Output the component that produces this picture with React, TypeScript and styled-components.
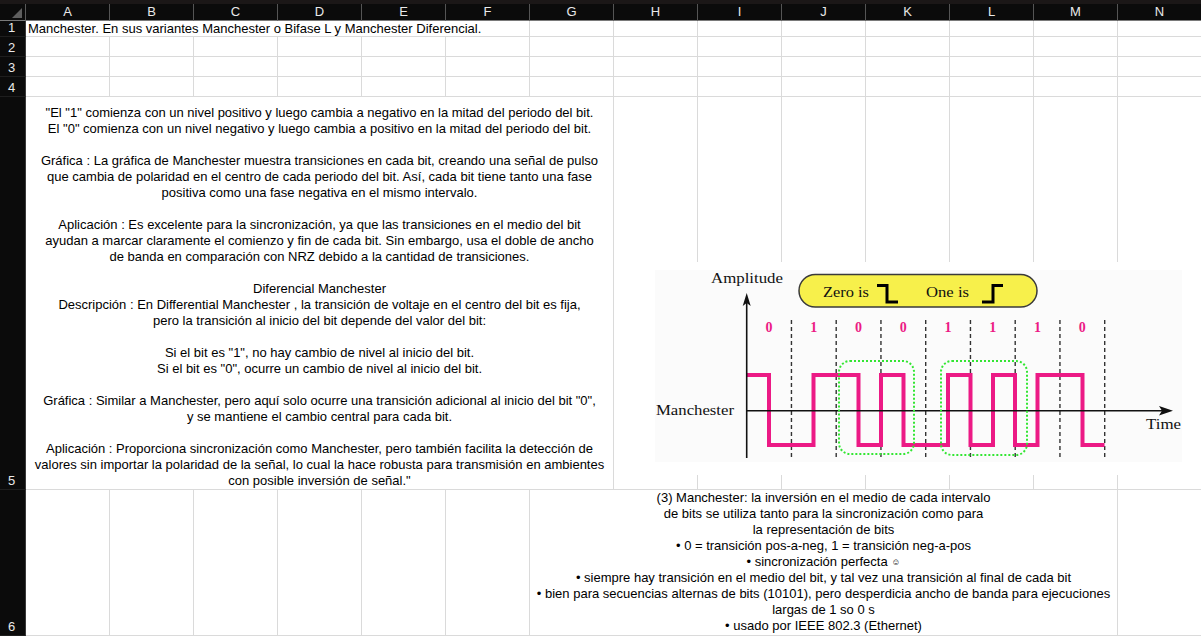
import React from "react";
import styled, { createGlobalStyle } from "styled-components";

const GlobalStyle = createGlobalStyle`
  html, body { margin: 0; padding: 0; background: #ffffff; overflow: hidden; }
  body { font-family: "Liberation Sans", Arial, sans-serif; }
`;

const COLS = ["A", "B", "C", "D", "E", "F", "G", "H", "I", "J", "K", "L", "M", "N"];

const Page = styled.div`
  position: relative;
  width: 1201px;
  height: 636px;
  overflow: hidden;
  background: #ffffff;
`;

const TopStrip = styled.div`
  height: 4px;
  background: #1b1717;
`;

const Sheet = styled.div`
  display: grid;
  grid-template-columns: 26px repeat(14, 84px);
  grid-template-rows: 17px 16px 20px 20px 20px 393px 146px;
`;

const Corner = styled.div`
  position: relative;
  background: #0b0b0b;
  border-right: 1px solid #5a5a5a;
  border-bottom: 1px solid #7a7a7a;
  box-sizing: border-box;
  &::after {
    content: "";
    position: absolute;
    right: 3px;
    bottom: 2px;
    width: 0;
    height: 0;
    border-left: 10px solid transparent;
    border-bottom: 10px solid #5e5e5e;
  }
`;

const ColHead = styled.div`
  background: #0b0b0b;
  color: #e9e9e9;
  font-size: 13px;
  line-height: 16px;
  text-align: center;
  border-right: 1px solid #555555;
  border-bottom: 1px solid #7a7a7a;
  box-sizing: border-box;
`;

const RowHead = styled.div`
  background: #0b0b0b;
  color: #e9e9e9;
  font-size: 13px;
  line-height: 16px;
  display: flex;
  align-items: flex-end;
  justify-content: center;
  padding-right: 2px;
  border-right: 1px solid #3a3a3a;
  border-bottom: 1px solid #1e1e1e;
  box-sizing: border-box;
`;

const Cell = styled.div<{ $span?: number }>`
  grid-column: span ${(p) => p.$span ?? 1};
  border-right: 1px solid #dadada;
  border-bottom: 1px solid #dadada;
  box-sizing: border-box;
  min-width: 0;
`;

const OverflowCell = styled(Cell)`
  color: #000000;
  font-size: 13px;
  line-height: 15px;
  padding-left: 2px;
  white-space: nowrap;
`;

const TextBlock = styled(Cell)<{ $valign: "start" | "end" }>`
  display: flex;
  flex-direction: column;
  justify-content: ${(p) => (p.$valign === "end" ? "flex-end" : "flex-start")};
  align-items: center;
  color: #000000;
  font-size: 13px;
  overflow: hidden;
`;

const Line = styled.div`
  height: 16px;
  line-height: 16px;
  white-space: pre;
  text-align: center;
`;

const Smiley = styled.span`
  font-size: 9px;
  vertical-align: 1px;
`;

const Figure = styled.div`
  position: absolute;
  left: 646px;
  top: 262px;
  width: 542px;
  height: 213px;
  background: #ffffff;
`;

const ROW5 = [
  '"El "1" comienza con un nivel positivo y luego cambia a negativo en la mitad del periodo del bit.',
  'El "0" comienza con un nivel negativo y luego cambia a positivo en la mitad del periodo del bit.',
  "",
  "Gráfica : La gráfica de Manchester muestra transiciones en cada bit, creando una señal de pulso",
  "que cambia de polaridad en el centro de cada periodo del bit. Así, cada bit tiene tanto una fase",
  "positiva como una fase negativa en el mismo intervalo.",
  "",
  "Aplicación : Es excelente para la sincronización, ya que las transiciones en el medio del bit",
  "ayudan a marcar claramente el comienzo y fin de cada bit. Sin embargo, usa el doble de ancho",
  "de banda en comparación con NRZ debido a la cantidad de transiciones.",
  "",
  "Diferencial Manchester",
  "Descripción : En Differential Manchester , la transición de voltaje en el centro del bit es fija,",
  "pero la transición al inicio del bit depende del valor del bit:",
  "",
  'Si el bit es "1", no hay cambio de nivel al inicio del bit.',
  'Si el bit es "0", ocurre un cambio de nivel al inicio del bit.',
  "",
  'Gráfica : Similar a Manchester, pero aquí solo ocurre una transición adicional al inicio del bit "0",',
  "y se mantiene el cambio central para cada bit.",
  "",
  "Aplicación : Proporciona sincronización como Manchester, pero también facilita la detección de",
  "valores sin importar la polaridad de la señal, lo cual la hace robusta para transmisión en ambientes",
  'con posible inversión de señal."',
];

const ROW6: React.ReactNode[] = [
  "(3) Manchester: la inversión en el medio de cada intervalo",
  "de bits se utiliza tanto para la sincronización como para",
  "la representación de bits",
  "• 0 = transición pos-a-neg, 1 = transición neg-a-pos",
  <>
    • sincronización perfecta <Smiley>☺</Smiley>
  </>,
  "• siempre hay transición en el medio del bit, y tal vez una transición al final de cada bit",
  "• bien para secuencias alternas de bits (10101), pero desperdicia ancho de banda para ejecuciones",
  "largas de 1 so 0 s",
  "• usado por IEEE 802.3 (Ethernet)",
];

const BITS = ["0", "1", "0", "0", "1", "1", "1", "0"];
const X0 = 746.7;
const BW = 44.75;
const MAGENTA = "#ec1a85";
const SERIF = '"Liberation Serif", "Times New Roman", serif';

function ManchesterChart() {
  const bounds = Array.from({ length: 8 }, (_, i) => X0 + BW * (i + 1));
  return (
    <svg width={542} height={213} viewBox="646 262 542 213">
      <rect x={655} y={270} width={527} height={192} fill="#fbfbfb" />
      {/* legend pill */}
      <rect x={799} y={274.5} width={238} height={32.5} rx={16.25} fill="#f7f04b" stroke="#3a3a3a" strokeWidth={1.5} />
      <text x={823} y={297} fontFamily={SERIF} fontSize={15.5} fill="#111" textLength={46} lengthAdjust="spacingAndGlyphs">
        Zero is
      </text>
      <path d="M877 285.5 H887 V302 H898" fill="none" stroke="#000" strokeWidth={3} />
      <text x={926} y={297} fontFamily={SERIF} fontSize={15.5} fill="#111" textLength={43} lengthAdjust="spacingAndGlyphs">
        One is
      </text>
      <path d="M982 302 H993 V285.5 H1003" fill="none" stroke="#000" strokeWidth={3} />
      {/* labels */}
      <text x={711} y={283} fontFamily={SERIF} fontSize={15.5} fill="#111" textLength={72} lengthAdjust="spacingAndGlyphs">
        Amplitude
      </text>
      <text x={656} y={415} fontFamily={SERIF} fontSize={15.5} fill="#111" textLength={78} lengthAdjust="spacingAndGlyphs">
        Manchester
      </text>
      <text x={1146} y={429} fontFamily={SERIF} fontSize={15.5} fill="#111" textLength={35} lengthAdjust="spacingAndGlyphs">
        Time
      </text>
      {BITS.map((b, i) => (
        <text
          key={i}
          x={X0 + BW * i + BW / 2}
          y={332}
          fontFamily={SERIF}
          fontWeight="bold"
          fontSize={14}
          fill={MAGENTA}
          textAnchor="middle"
        >
          {b}
        </text>
      ))}
      {/* bit boundaries */}
      {bounds.map((x, i) => (
        <line key={i} x1={x} y1={320} x2={x} y2={459} stroke="#333" strokeWidth={1.4} strokeDasharray="4 3" />
      ))}
      {/* signal */}
      <path
        d="M746.5 375 H769 V445 H813.5 V375 H858.5 V445 H881 V375 H903.5 V445 H948 V375 H970.5 V445 H993 V375 H1015 V445 H1037.5 V375 H1082.5 V445 H1104.5"
        fill="none"
        stroke={MAGENTA}
        strokeWidth={4}
        strokeLinejoin="miter"
      />
      {/* axes */}
      <line x1={746.7} y1={302} x2={746.7} y2={458} stroke="#111" strokeWidth={1.6} />
      <polygon points="746.7,293 742.7,306 746.7,303 750.7,306" fill="#111" />
      <line x1={746} y1={410.8} x2={1162} y2={410.8} stroke="#111" strokeWidth={1.6} />
      <polygon points="1173,410.8 1159,406 1162,410.8 1159,415.6" fill="#111" />
      {/* highlight boxes */}
      <rect x={839} y={361} width={75} height={93} rx={11} fill="none" stroke="#33e633" strokeWidth={2} strokeDasharray="2 2" />
      <rect x={941} y={361} width={86} height={94} rx={11} fill="none" stroke="#33e633" strokeWidth={2} strokeDasharray="2 2" />
    </svg>
  );
}

export default function App() {
  return (
    <Page>
      <GlobalStyle />
      <TopStrip />
      <Sheet>
        <Corner />
        {COLS.map((c) => (
          <ColHead key={c}>{c}</ColHead>
        ))}

        <RowHead>1</RowHead>
        <OverflowCell $span={6}>
          Manchester. En sus variantes Manchester o Bifase L y Manchester Diferencial.
        </OverflowCell>
        {COLS.slice(6).map((c) => (
          <Cell key={c} />
        ))}

        {[2, 3, 4].map((r) => (
          <React.Fragment key={r}>
            <RowHead>{r}</RowHead>
            {COLS.map((c) => (
              <Cell key={c} />
            ))}
          </React.Fragment>
        ))}

        <RowHead>5</RowHead>
        <TextBlock $span={7} $valign="end">
          {ROW5.map((l, i) => (
            <Line key={i}>{l || "\u00a0"}</Line>
          ))}
        </TextBlock>
        {COLS.slice(7).map((c) => (
          <Cell key={c} />
        ))}

        <RowHead>6</RowHead>
        {COLS.slice(0, 6).map((c) => (
          <Cell key={c} />
        ))}
        <TextBlock $span={7} $valign="start">
          {ROW6.map((l, i) => (
            <Line key={i}>{l}</Line>
          ))}
        </TextBlock>
        <Cell />
      </Sheet>
      <Figure>
        <ManchesterChart />
      </Figure>
    </Page>
  );
}
